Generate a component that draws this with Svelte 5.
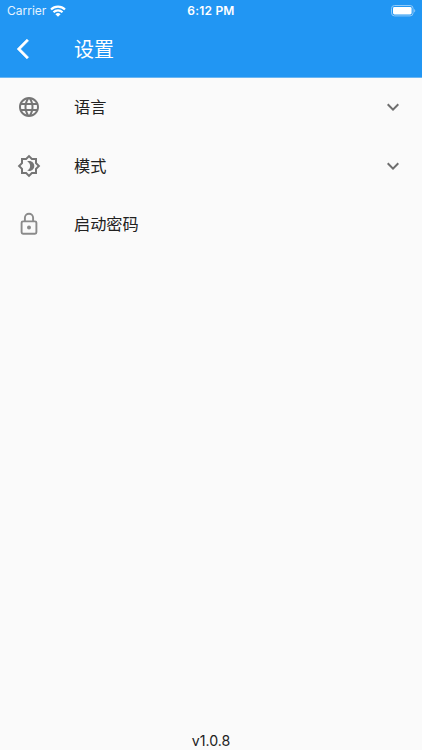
<script lang="ts">
  type Item = { icon: string; title: string; expandable: boolean };

  const version = "v1.0.8";
  const items: Item[] = [
    { icon: "language", title: "语言", expandable: true },
    { icon: "brightness", title: "模式", expandable: true },
    { icon: "lock", title: "启动密码", expandable: false },
  ];
</script>

<div class="page">
  <header>
    <div class="status">
      <div class="carrier">
        <span>Carrier</span>
        <svg class="wifi" viewBox="0 0 16 12">
          <path d="M1 4.5a10 10 0 0 1 14 0" />
          <path d="M3.5 7.2a6.4 6.4 0 0 1 9 0" />
          <path class="dot" d="M8 11.8 5.4 9.2a3.7 3.7 0 0 1 5.2 0z" />
        </svg>
      </div>
      <span class="time">6:12 PM</span>
      <svg class="battery" viewBox="0 0 25 12">
        <rect class="frame" x="0.5" y="0.5" width="21.6" height="10.4" rx="3" />
        <rect x="2" y="2" width="18.6" height="7.4" rx="1.4" />
        <path class="cap" d="M23.2 4v3.6c1.4-.6 1.4-3 0-3.6z" />
      </svg>
    </div>
    <div class="toolbar">
      <svg class="back" viewBox="0 0 24 24">
        <path d="M11.67 3.87 9.9 2.1 0 12l9.9 9.9 1.77-1.77L3.54 12z" />
      </svg>
      <h1>设置</h1>
    </div>
  </header>

  <ul>
    {#each items as item}
      <li>
        <svg class="icon {item.icon}" viewBox="0 0 24 24">
          {#if item.icon === "language"}
            <path d="M11.99 2C6.47 2 2 6.48 2 12s4.47 10 9.99 10C17.52 22 22 17.52 22 12S17.52 2 11.99 2zm6.93 6h-2.95a15.65 15.65 0 0 0-1.38-3.56A8.03 8.03 0 0 1 18.92 8zM12 4.04c.83 1.2 1.48 2.53 1.91 3.96h-3.82c.43-1.43 1.08-2.76 1.91-3.96zM4.26 14C4.1 13.36 4 12.69 4 12s.1-1.36.26-2h3.38c-.08.66-.14 1.32-.14 2s.06 1.34.14 2H4.26zm.82 2h2.95c.32 1.25.78 2.45 1.38 3.56A7.99 7.99 0 0 1 5.08 16zm2.95-8H5.08a7.99 7.99 0 0 1 4.33-3.56A15.65 15.65 0 0 0 8.03 8zM12 19.96c-.83-1.2-1.48-2.53-1.91-3.96h3.82c-.43 1.43-1.08 2.76-1.91 3.96zM14.34 14H9.66c-.09-.66-.16-1.32-.16-2s.07-1.35.16-2h4.68c.09.65.16 1.32.16 2s-.07 1.34-.16 2zm.25 5.56c.6-1.11 1.06-2.31 1.38-3.56h2.95a8.03 8.03 0 0 1-4.33 3.56zM16.36 14c.08-.66.14-1.32.14-2s-.06-1.34-.14-2h3.38c.16.64.26 1.31.26 2s-.1 1.36-.26 2h-3.38z" />
          {:else if item.icon === "brightness"}
            <path d="M20 8.69V4h-4.69L12 .69 8.69 4H4v4.69L.69 12 4 15.31V20h4.69L12 23.31 15.31 20H20v-4.69L23.31 12 20 8.69zm-2 5.79V18h-3.52L12 20.48 9.52 18H6v-3.52L3.52 12 6 9.52V6h3.52L12 3.52 14.48 6H18v3.52L20.48 12 18 14.48zM12.29 7c-.74 0-1.45.17-2.08.46 1.72.79 2.92 2.53 2.92 4.54s-1.2 3.75-2.92 4.54c.63.29 1.34.46 2.08.46 2.76 0 5-2.24 5-5s-2.24-5-5-5z" />
          {:else}
            <rect x="4.6" y="9.4" width="14.8" height="12.3" rx="1.4" />
            <path d="M7.9 9.4V5.8a4.1 4.1 0 0 1 8.2 0v3.6" />
            <circle cx="12" cy="15.6" r="2" />
          {/if}
        </svg>
        <span class="title">{item.title}</span>
        {#if item.expandable}
          <svg class="more" viewBox="0 0 24 24">
            <path d="M16.59 8.59 12 13.17 7.41 8.59 6 10l6 6 6-6z" />
          </svg>
        {/if}
      </li>
    {/each}
  </ul>

  <footer>{version}</footer>
</div>

<style>
  :global(body) {
    margin: 0;
    background: #fafafa;
  }
  .page {
    display: flex;
    flex-direction: column;
    height: 100vh;
    overflow: hidden;
    background: #fafafa;
    color: #212121;
    font-family: Inter, "Noto Sans CJK SC", sans-serif;
  }
  header {
    height: 78px;
    flex: none;
    box-sizing: border-box;
    border-bottom: 1px solid #6ab6f3;
    background: #2196f3;
    color: #fff;
  }
  .status {
    display: grid;
    grid-template-columns: 1fr auto 1fr;
    align-items: center;
    height: 21px;
    padding: 0 6px 0 7px;
    font-size: 12px;
    line-height: 21px;
  }
  .carrier {
    display: flex;
    align-items: center;
    gap: 4px;
    color: #e4f3ff;
  }
  .wifi {
    width: 16px;
    height: 12px;
    fill: none;
    stroke: #fff;
    stroke-width: 2.2;
  }
  .wifi .dot {
    fill: #fff;
    stroke: none;
  }
  .time {
    margin-right: 1px;
    font-weight: 600;
    letter-spacing: 0.2px;
  }
  .battery {
    justify-self: end;
    width: 25px;
    height: 12px;
    fill: #fff;
  }
  .battery .frame {
    fill: none;
    stroke: #90caf9;
  }
  .battery .cap {
    fill: #90caf9;
  }
  .toolbar {
    display: flex;
    align-items: center;
    height: 57px;
    padding-left: 17px;
  }
  .back {
    width: 24px;
    height: 24px;
    margin-bottom: 1px;
    fill: #fff;
    stroke: #fff;
    stroke-width: 0.4;
  }
  h1 {
    margin: 0 0 0 33px;
    font-size: 20px;
    font-weight: 400;
    line-height: 28px;
  }
  ul {
    flex: 1;
    margin: 0;
    padding: 0;
    list-style: none;
  }
  li {
    display: flex;
    align-items: center;
    height: 58.6px;
    padding: 0 17px;
  }
  .icon {
    width: 24px;
    height: 24px;
    fill: #757575;
  }
  .lock {
    fill: none;
    stroke: #8a8a8a;
    stroke-width: 1.9;
  }
  .lock circle {
    fill: #8a8a8a;
    stroke: none;
  }
  .title {
    flex: 1;
    margin-left: 33px;
    font-size: 16.2px;
    line-height: 24px;
  }
  .more {
    width: 24px;
    height: 24px;
    fill: #6e6e6e;
  }
  footer {
    flex: none;
    font-size: 14.2px;
    line-height: 18px;
    text-align: center;
  }
</style>
